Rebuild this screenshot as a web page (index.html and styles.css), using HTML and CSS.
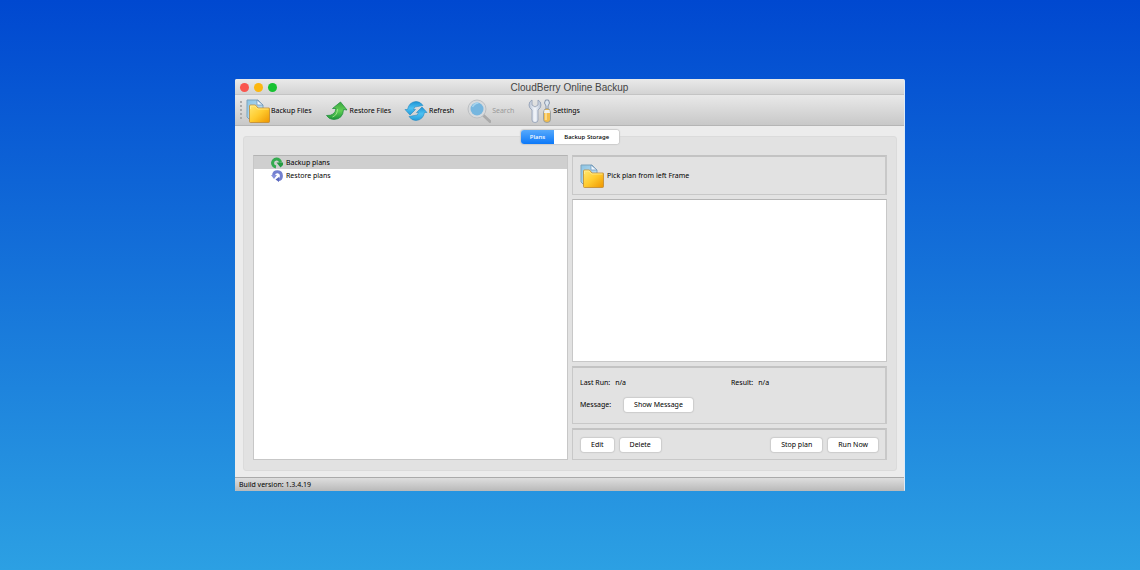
FILE: index.html
```html
<!DOCTYPE html>
<html lang="en">
<head>
<meta charset="utf-8">
<title>CloudBerry Online Backup</title>
<link rel="stylesheet" href="styles.css">
</head>
<body>
<svg class="defs" width="0" height="0" aria-hidden="true">
  <defs>
    <linearGradient id="gold" x1="0" y1="0" x2="1" y2="1"><stop offset="0" stop-color="#ffe873"/><stop offset=".5" stop-color="#ffcb2e"/><stop offset="1" stop-color="#ee9500"/></linearGradient>
    <linearGradient id="sheet" x1="0" y1="0" x2="1" y2="1"><stop offset="0" stop-color="#8cc4e4"/><stop offset="1" stop-color="#c4e2f4"/></linearGradient>
    <linearGradient id="green" x1="0" y1="0" x2="0" y2="1"><stop offset="0" stop-color="#3aa63e"/><stop offset=".5" stop-color="#62cf55"/><stop offset="1" stop-color="#1b9438"/></linearGradient>
    <linearGradient id="blue" x1="0" y1="0" x2="0" y2="1"><stop offset="0" stop-color="#1c93d4"/><stop offset=".5" stop-color="#4ec1f2"/><stop offset="1" stop-color="#259ddb"/></linearGradient>
    <linearGradient id="steel" x1="0" y1="0" x2="1" y2="0"><stop offset="0" stop-color="#b9c3d4"/><stop offset=".5" stop-color="#f3f6fb"/><stop offset="1" stop-color="#b4bfd2"/></linearGradient>
    <symbol id="folder" viewBox="0 0 24 24">
      <path d="M1 1h11l5 5v14H3L1 18z" fill="url(#sheet)" stroke="#7da3bc"/>
      <path d="M11 1v5h6z" fill="#eef7fd" stroke="#6f91b5" stroke-width=".7"/>
      <path d="M3.500 7q0-1 1-1h5l2.500 3h11q.5 0 .5.600V22.500q0 1-1 1h-18q-1 0-1-1z" fill="url(#gold)" stroke="#bf8930" stroke-width=".8"/>
      <path d="M4.500 10V7h4.500l2.500 3h11" fill="none" stroke="#fff0a0" stroke-width=".7"/>
    </symbol>
  </defs>
</svg>
<main class="window">
  <header class="titlebar">
    <div class="lights"><span class="light close"></span><span class="light minimize"></span><span class="light zoom"></span></div>
    <h1 class="title">CloudBerry Online Backup</h1>
  </header>
  <nav class="toolbar">
    <span class="grip"></span>
    <button class="tool"><svg class="icon" viewBox="0 0 24 24"><use href="#folder"/></svg>Backup Files</button>
    <button class="tool restore"><svg class="icon" viewBox="0 0 24 24"><path d="M1.500 16.500Q10 17 11 9.500H7.500L15.500 3 22 11 18.500 10.500Q18 20 9 20.500 4 20.500 1.500 16.500z" fill="url(#green)" stroke="#259040" stroke-width=".8" stroke-linejoin="round"/><path d="M12.500 10q0 6-5 8" fill="none" stroke="#9be58a"/></svg>Restore Files</button>
    <button class="tool refresh"><svg class="icon" viewBox="0 0 24 24"><path d="M1 10.500H3.500Q5 3 12 2.500 16.500 2.500 19 6.500L13.500 7.500Q10 7 9.500 10.500H11.500L6 16z" fill="url(#blue)" stroke="#2587c0" stroke-width=".6"/><path d="M23 13.500H20.500Q19 21 12 21.500 7.500 21.500 5 17.500l5.500-1q3.500.5 4-3H12.500L18 8z" fill="url(#blue)" stroke="#2587c0" stroke-width=".6"/></svg>Refresh</button>
    <button class="tool search" disabled><svg class="icon" viewBox="0 0 24 24"><path d="M16 16l7 6.500" stroke="#aaa" stroke-width="3" stroke-linecap="round"/><circle cx="10" cy="10" r="9" fill="#d7dadd" stroke="#bcbfc2"/><circle cx="10" cy="10" r="6.500" fill="#76b6df"/><path d="M5.500 8q2-4 6-4" fill="none" stroke="#a7d4ee" stroke-width="1.500"/></svg>Search</button>
    <button class="tool settings"><svg class="icon" viewBox="0 0 24 24"><path d="M4 1Q1 2.500 1 6q0 3 3 5v10q0 2.500 3 2.500T10 21V11q3-2 3-5 0-3.500-3-5v5L7 8 4 6z" fill="url(#steel)" stroke="#8f9db3" stroke-width=".8"/><path d="M17.500 1h3l1 3-1.500 3v4h-2V7l-1.500-3z" fill="#dce5ef" stroke="#71829b" stroke-width=".8"/><path d="M16.500 10.500q2.500-2 5 0l1 3v7q0 3-3.500 3t-3.500-3v-7z" fill="#f3bd4c" stroke="#8795a8" stroke-width=".8"/><path d="M16.500 11h5l.5 3h-6z" fill="#edf0f3"/><path d="M18 14v7" stroke="#ffe39b" stroke-width="1.500"/></svg>Settings</button>
  </nav>
  <section class="content">
    <div class="tabs" role="tablist">
      <button class="tab active" role="tab" aria-selected="true">Plans</button>
      <button class="tab" role="tab" aria-selected="false">Backup Storage</button>
    </div>
    <div class="group">
      <ul class="plans">
        <li class="plan selected"><svg class="mini" viewBox="0 0 12 12"><path d="M5 10A4 4 0 1 1 9.500 5.500" fill="none" stroke="#35ab50" stroke-width="3"/><path d="M5.500 5.500H12V8L9.500 10.500z" fill="#249a42"/></svg>Backup plans</li>
        <li class="plan"><svg class="mini" viewBox="0 0 12 12"><path d="M2.500 5A4 4 0 1 1 7 9.800" fill="none" stroke="#7480d0" stroke-width="3"/><path d="M0 5h6L3 9z" fill="#8791dc"/><path d="M8 7v5L4.500 9.500z" fill="#5966bd"/></svg>Restore plans</li>
      </ul>
      <div class="details">
        <div class="panel pick"><svg class="icon" viewBox="0 0 24 24"><use href="#folder"/></svg>Pick plan from left Frame</div>
        <div class="preview"></div>
        <div class="panel info">
          <div class="fact"><span>Last Run:</span><span>n/a</span></div>
          <div class="fact"><span>Result:</span><span>n/a</span></div>
          <div class="message"><span>Message:</span><button class="push">Show Message</button></div>
        </div>
        <div class="panel actions">
          <button class="push edit">Edit</button>
          <button class="push delete">Delete</button>
          <button class="push stop">Stop plan</button>
          <button class="push run">Run Now</button>
        </div>
      </div>
    </div>
  </section>
  <footer class="status">Build version: 1.3.4.19</footer>
</main>
</body>
</html>
```
FILE: styles.css
```css
* { box-sizing: border-box; }
body {
  margin: 0;
  min-height: 100vh;
  padding: 79px 235px;
  display: flex;
  background: linear-gradient(#0048d0, #2ca0e3);
  color: #000;
  font: 7px/10px "Noto Sans", sans-serif;
}
button { font: inherit; color: inherit; border: 0; padding: 0; margin: 0; white-space: nowrap; }
.defs { position: absolute; }
.window {
  flex: 1;
  min-width: 0;
  display: flex;
  flex-direction: column;
  background: #ececec;
  border-radius: 2px 2px 1px 1px;
  border-right: 1px solid #ddebf8;
  overflow: hidden;
}
.titlebar {
  height: 16px;
  display: grid;
  grid-template-columns: 1fr auto 1fr;
  align-items: center;
  padding: 1px 5px 0;
  background: linear-gradient(#eaeaea, #d3d3d3);
  border-bottom: 1px solid #c4c4c4;
}
.lights { display: flex; gap: 5px; }
.light { width: 9px; height: 9px; border-radius: 50%; }
.close { background: #f9564f; }
.minimize { background: #fcb711; }
.zoom { background: #17c232; }
.title { margin: 0; padding-top: 1px; font: 10px/14px "Liberation Sans", Arial, sans-serif; color: #444; }
.toolbar {
  height: 31px;
  display: flex;
  align-items: center;
  padding: 1px 0 0 5px;
  background: linear-gradient(#e9e9e9, #c8c8c8);
  border-bottom: 1px solid #b5b5b5;
}
.grip { width: 2px; height: 20px; margin-right: 4px; background: repeating-linear-gradient(#aaa 0 2px, transparent 2px 4px); }
.tool { display: flex; align-items: center; gap: 1px; background: none; }
.icon { width: 24px; height: 24px; flex: none; }
.restore { margin-left: 13px; }
.refresh { margin-left: 13px; }
.search { margin-left: 13px; color: #999; }
.settings { margin-left: 14px; }
.content { flex: 1; display: flex; flex-direction: column; padding: 4px 7px 6px 8px; }
.tabs {
  z-index: 1;
  align-self: center;
  height: 14px;
  display: flex;
  border-radius: 3px;
  background: #fff;
  box-shadow: 0 0 1px 1px #ccc;
  overflow: hidden;
  font-size: 6px;
  font-weight: 500;
}
.tab { padding: 0 10px; background: #fff; }
.tab.active { padding: 0 9px; background: linear-gradient(#56a9fc, #0c78f8); color: #fff; }
.group {
  flex: 1;
  display: grid;
  grid-template-columns: 1fr 1fr;
  gap: 4px;
  margin-top: -8px;
  padding: 18px 9px 10px;
  background: #e2e2e2;
  border: 1px solid #dbdbdb;
  border-radius: 3px;
}
.plans { margin: 0; padding: 0; list-style: none; background: #fff; border: 1px solid #c7c7c7; border-top-color: #b3b3b3; }
.plan { height: 13px; display: flex; align-items: center; gap: 3px; padding-left: 17px; }
.selected { background: #cfcfcf; }
.mini { width: 12px; height: 12px; }
.details { display: flex; flex-direction: column; gap: 4px; }
.panel, .preview { border: 1px solid #c8c8c8; }
.panel { border-top: 2px solid #c3c3c3; border-right-width: 2px; }
.pick { height: 40px; display: flex; align-items: center; gap: 3px; padding-left: 7px; }
.preview { flex: 1; background: #fff; border-top-color: #b5b5b5; }
.info { height: 59px; display: grid; grid-template-columns: 151px 1fr; grid-template-rows: 10px 15px; row-gap: 11px; padding: 10px 7px; }
.fact { display: flex; gap: 5px; }
.message { display: flex; align-items: center; gap: 13px; }
.push { height: 14px; padding: 0 10px; border-radius: 3px; background: #fff; box-shadow: 0 0 1px 1px #ccc; }
.info { height: 58px; row-gap: 9px; }
.actions { height: 32px; display: flex; align-items: center; gap: 6px; padding: 0 7px 0 8px; }
.stop { margin-left: auto; }
.status {
  height: 14px;
  padding: 2px 4px 0;
  background: linear-gradient(#dedede, #b9b9b9);
  border-top: 1px solid #aaa;
}
```
